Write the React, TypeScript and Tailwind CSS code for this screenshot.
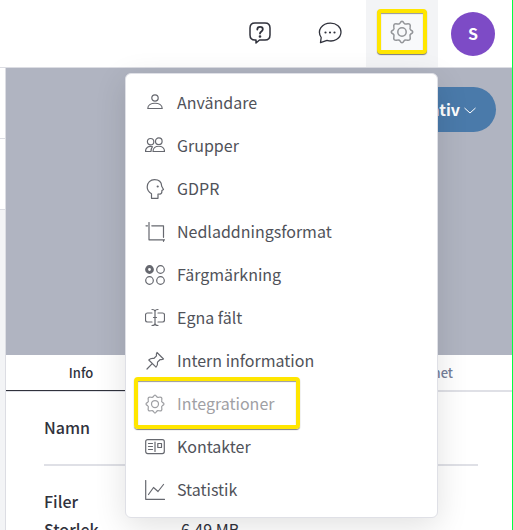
import React from "react";

const iconClass = "size-5 shrink-0";

function Icon({ children }: { children: React.ReactNode }) {
  return (
    <svg
      viewBox="0 0 20 20"
      className="size-5 shrink-0 text-[#66686f]"
      fill="none"
      stroke="currentColor"
      strokeWidth="1.2"
      strokeLinecap="round"
      strokeLinejoin="round"
      aria-hidden="true"
    >
      {children}
    </svg>
  );
}

function GearIcon({ className }: { className: string }) {
  return (
    <svg
      viewBox="0 0 24 24"
      className={className}
      fill="none"
      stroke="currentColor"
      strokeWidth="1.5"
      strokeLinejoin="round"
      aria-hidden="true"
    >
      <circle cx="12" cy="12" r="4.2" />
      <path d="M10 3.200Q12 -.8 14 3.200Q14.800 4.500 16.600 3.900Q21.100 2.900 20.100 7.400Q19.500 9.200 20.800 10Q24.800 12 20.800 14Q19.500 14.800 20.100 16.600Q21.100 21.100 16.600 20.100Q14.800 19.500 14 20.800Q12 24.800 10 20.800Q9.200 19.500 7.400 20.100Q2.900 21.100 3.900 16.600Q4.500 14.800 3.200 14Q-.8 12 3.200 10Q4.500 9.200 3.900 7.400Q2.900 2.900 7.400 3.900Q9.200 4.500 10 3.200Z" />
    </svg>
  );
}

const items = [
  {
    label: "Användare",
    icon: (
      <Icon>
        <circle cx="10" cy="5" r="3.2" />
        <path d="M2.800 15.500c0-7 14.400-7 14.400 0Z" />
      </Icon>
    ),
  },
  {
    label: "Grupper",
    icon: (
      <Icon>
        <circle cx="5.600" cy="5.700" r="3.200" />
        <circle cx="13.800" cy="5.200" r="3.300" />
        <path d="M8 15.500c0-7 11.500-7 11.500 0ZM7.500 10.700C3.500 9.500.5 11.500.5 15.500H6C6 13.500 6.500 12 7.500 10.700Z" />
      </Icon>
    ),
  },
  {
    label: "GDPR",
    icon: (
      <Icon>
        <path d="M6.500 19.300v-4.600C3.500 13 2.200 10.700 2.200 8 2.200 3.500 5.500.7 9.500.7c4.300 0 7 2.600 7.200 6.500l1.800 3.300-1.600 1c.1 2.800-.7 4-2.900 3.500h-1v4.300Z" />
        <circle cx="12.700" cy="7.500" r=".5" fill="currentColor" />
      </Icon>
    ),
  },
  {
    label: "Nedladdningsformat",
    icon: (
      <Icon>
        <path d="M4 .5v17.300h15.500M1 3.800h1.500M6.800 3.800h11.700v11.500M18.500 17.800v1.500" />
      </Icon>
    ),
  },
  {
    label: "Färgmärkning",
    icon: (
      <Icon>
        <circle cx="4.500" cy="4.500" r="2.900" strokeWidth="3" />
        <circle cx="15.500" cy="4.500" r="3.800" />
        <circle cx="4.500" cy="15.500" r="3.800" />
        <circle cx="15.500" cy="15.500" r="3.800" />
      </Icon>
    ),
  },
  {
    label: "Egna fält",
    icon: (
      <Icon>
        <path d="M7 5H2.500a2 2 0 0 0-2 2v5a2 2 0 0 0 2 2H7M13 5h4.500a2 2 0 0 1 2 2v5a2 2 0 0 1-2 2H13M7 1.500c2 0 3 .5 3 2v12c0 1.500-1 2-3 2M13 1.500c-2 0-3 .5-3 2M10 15.500c0 1.500 1 2 3 2M8.500 9.500h3" />
      </Icon>
    ),
  },
  {
    label: "Intern information",
    icon: (
      <Icon>
        <path d="m12 1.500 6.500 6.500c-1.500.8-2.300.8-3.300.5l-2.700 2.700c.3 1.800 0 3.500-1.500 5L3.800 9c1.500-1.500 3.200-1.800 5-1.500l2.700-2.700c-.3-1-.3-2 .5-3.300ZM7.200 12.700 2 18" />
      </Icon>
    ),
  },
  {
    label: "Integrationer",
    active: true,
    icon: <GearIcon className={iconClass} />,
  },
  {
    label: "Kontakter",
    icon: (
      <Icon>
        <rect x=".7" y="2.600" width="18.600" height="14" rx="2" />
        <path d="M3.500 6.500h4M3.500 9.500h4M3.500 12.500h4M10 5v9.500M12.800 6.500h3.700v4h-3.700Z" />
      </Icon>
    ),
  },
  {
    label: "Statistik",
    icon: (
      <Icon>
        <path d="M.7.500v18.800h18.800M3.500 14.500l5-7 4.500 4 5.500-7" />
      </Icon>
    ),
  },
];

function SettingsMenu() {
  return (
    <nav className="absolute top-[73px] right-[74px] w-[313px] rounded-md border border-[#dfe0e6] bg-white pt-[7px] pb-[6px] shadow-[0_8px_32px_rgba(0,0,0,0.12)]">
      {items.map((item) => (
        <div key={item.label} className="relative">
          <button
            type="button"
            className={
              item.active
                ? "flex h-[43px] w-full items-center gap-3 pl-[19px] text-[#9fa0a4]"
                : "flex h-[43px] w-full items-center gap-3 pl-[19px] text-[#505259]"
            }
          >
            {item.icon}
            <span className="pb-0.5">{item.label}</span>
          </button>
          {item.active && (
            <span className="pointer-events-none absolute -top-[5px] left-2 h-[52px] w-[166px] rounded-[4px] border-4 border-[#ffe600] shadow-[0_1px_1px_rgba(0,0,0,0.5),inset_0_1px_1px_rgba(0,0,0,0.4)]" />
          )}
        </div>
      ))}
    </nav>
  );
}

function Header() {
  return (
    <header className="flex h-[68px] items-center justify-end border-b border-[#dcdde3] bg-white pr-[17px] text-[#30323c]">
      <button type="button" aria-label="Hjälp" className="mr-[47px] pb-0.5">
        <svg viewBox="0 0 22 22" className="size-[22px]" fill="none" stroke="currentColor" strokeWidth="1.5" strokeLinecap="round" strokeLinejoin="round">
          <path d="M6 1h10c3.500 0 5 1.500 5 5v7c0 3.500-1.500 5-5 5h-5.500L7 21v-3H6c-3.500 0-5-1.500-5-5V6c0-3.500 1.500-5 5-5Z" />
          <path d="M8.300 7.500c0-3.500 5.500-3.300 5.500-.2 0 2.200-2.800 2-2.800 4.200" strokeWidth="1.800" />
          <circle cx="11" cy="14.500" r=".6" fill="currentColor" />
        </svg>
      </button>
      <button type="button" aria-label="Chatt" className="mr-6 pb-0.5">
        <svg viewBox="0 0 24 22" className="h-[22px] w-6" fill="none" stroke="currentColor" strokeWidth="1.300" strokeLinecap="round" strokeLinejoin="round">
          <path d="M3.200 15.500C-1.500 8.500 4 1.200 12.500 1.200c6 0 10.500 3.800 10.500 8.900 0 6.500-7.500 10.500-14 8.200L2.500 20.700Z" />
          <path d="M7.500 10.500h.01M12 10.500h.01M16.500 10.500h.01" strokeWidth="2.200" />
        </svg>
      </button>
      <div className="flex h-full w-[72px] items-center justify-center bg-[#f3f4f6] pb-1">
        <button
          type="button"
          aria-label="Inställningar"
          className="flex h-[45px] w-[50px] items-center justify-center rounded-[4px] border-4 border-[#ffe600] bg-[#f8f9fb] text-[#939599] shadow-[0_1px_1px_rgba(0,0,0,0.5),inset_0_1px_1px_rgba(0,0,0,0.4)]"
        >
          <GearIcon className="size-6 shrink-0" />
        </button>
      </div>
      <button type="button" className="ml-[13px] size-11 rounded-full bg-[#7d4bc6] pb-0.5 font-bold text-white">
        S
      </button>
    </header>
  );
}

function App() {
  return (
    <div className="relative h-screen overflow-hidden border-r border-[#00ff40] bg-white font-['Noto_Sans_CJK_SC',sans-serif] text-base text-[#30323c]">
      <Header />
      <div className="flex h-full">
        <aside className="w-[6px] shrink-0 border-r border-[#dcdde3] bg-[#f3f4f6]">
          <div className="h-[71px] border-b border-[#dcdde3] bg-white" />
          <div className="h-[71px] border-b border-[#dcdde3] bg-white" />
        </aside>
        <main className="grow">
          <div className="flex h-[287px] items-start justify-end bg-[#b0b4c1] pt-[19px] pr-4">
            <button type="button" className="flex h-[45px] items-center gap-1 rounded-full bg-[#4a7aaa] px-5 font-bold text-white">
              <span className="pb-0.5">Alternativ</span>
              <svg viewBox="0 0 12 12" className="size-3" fill="none" stroke="currentColor" strokeWidth="1" aria-hidden="true">
                <path d="m.5 4 5.500 5 5.500-5" />
              </svg>
            </button>
          </div>
          <div className="flex h-[37px] justify-between border-b-2 border-[#dfe0e6] text-[13px] font-medium">
            <button type="button" className="h-9 w-[150px] border-b border-[#30323c]">
              Info
            </button>
            <button type="button" className="pr-[59px] text-[#75809a]">
              Säkerhet
            </button>
          </div>
          <dl className="pr-[34px] pl-[38px]">
            <div className="flex h-[74px] items-center border-b-2 border-[#dfe0e6] pb-0.5">
              <dt className="w-[137px] font-medium">Namn</dt>
            </div>
            <div className="mt-[21px] flex h-7 items-center">
              <dt className="w-[137px] font-medium">Filer</dt>
            </div>
            <div className="flex h-7 items-center">
              <dt className="w-[137px] font-medium">Storlek</dt>
              <dd>6,49 MB</dd>
            </div>
          </dl>
        </main>
      </div>
      <SettingsMenu />
    </div>
  );
}

export default App;
